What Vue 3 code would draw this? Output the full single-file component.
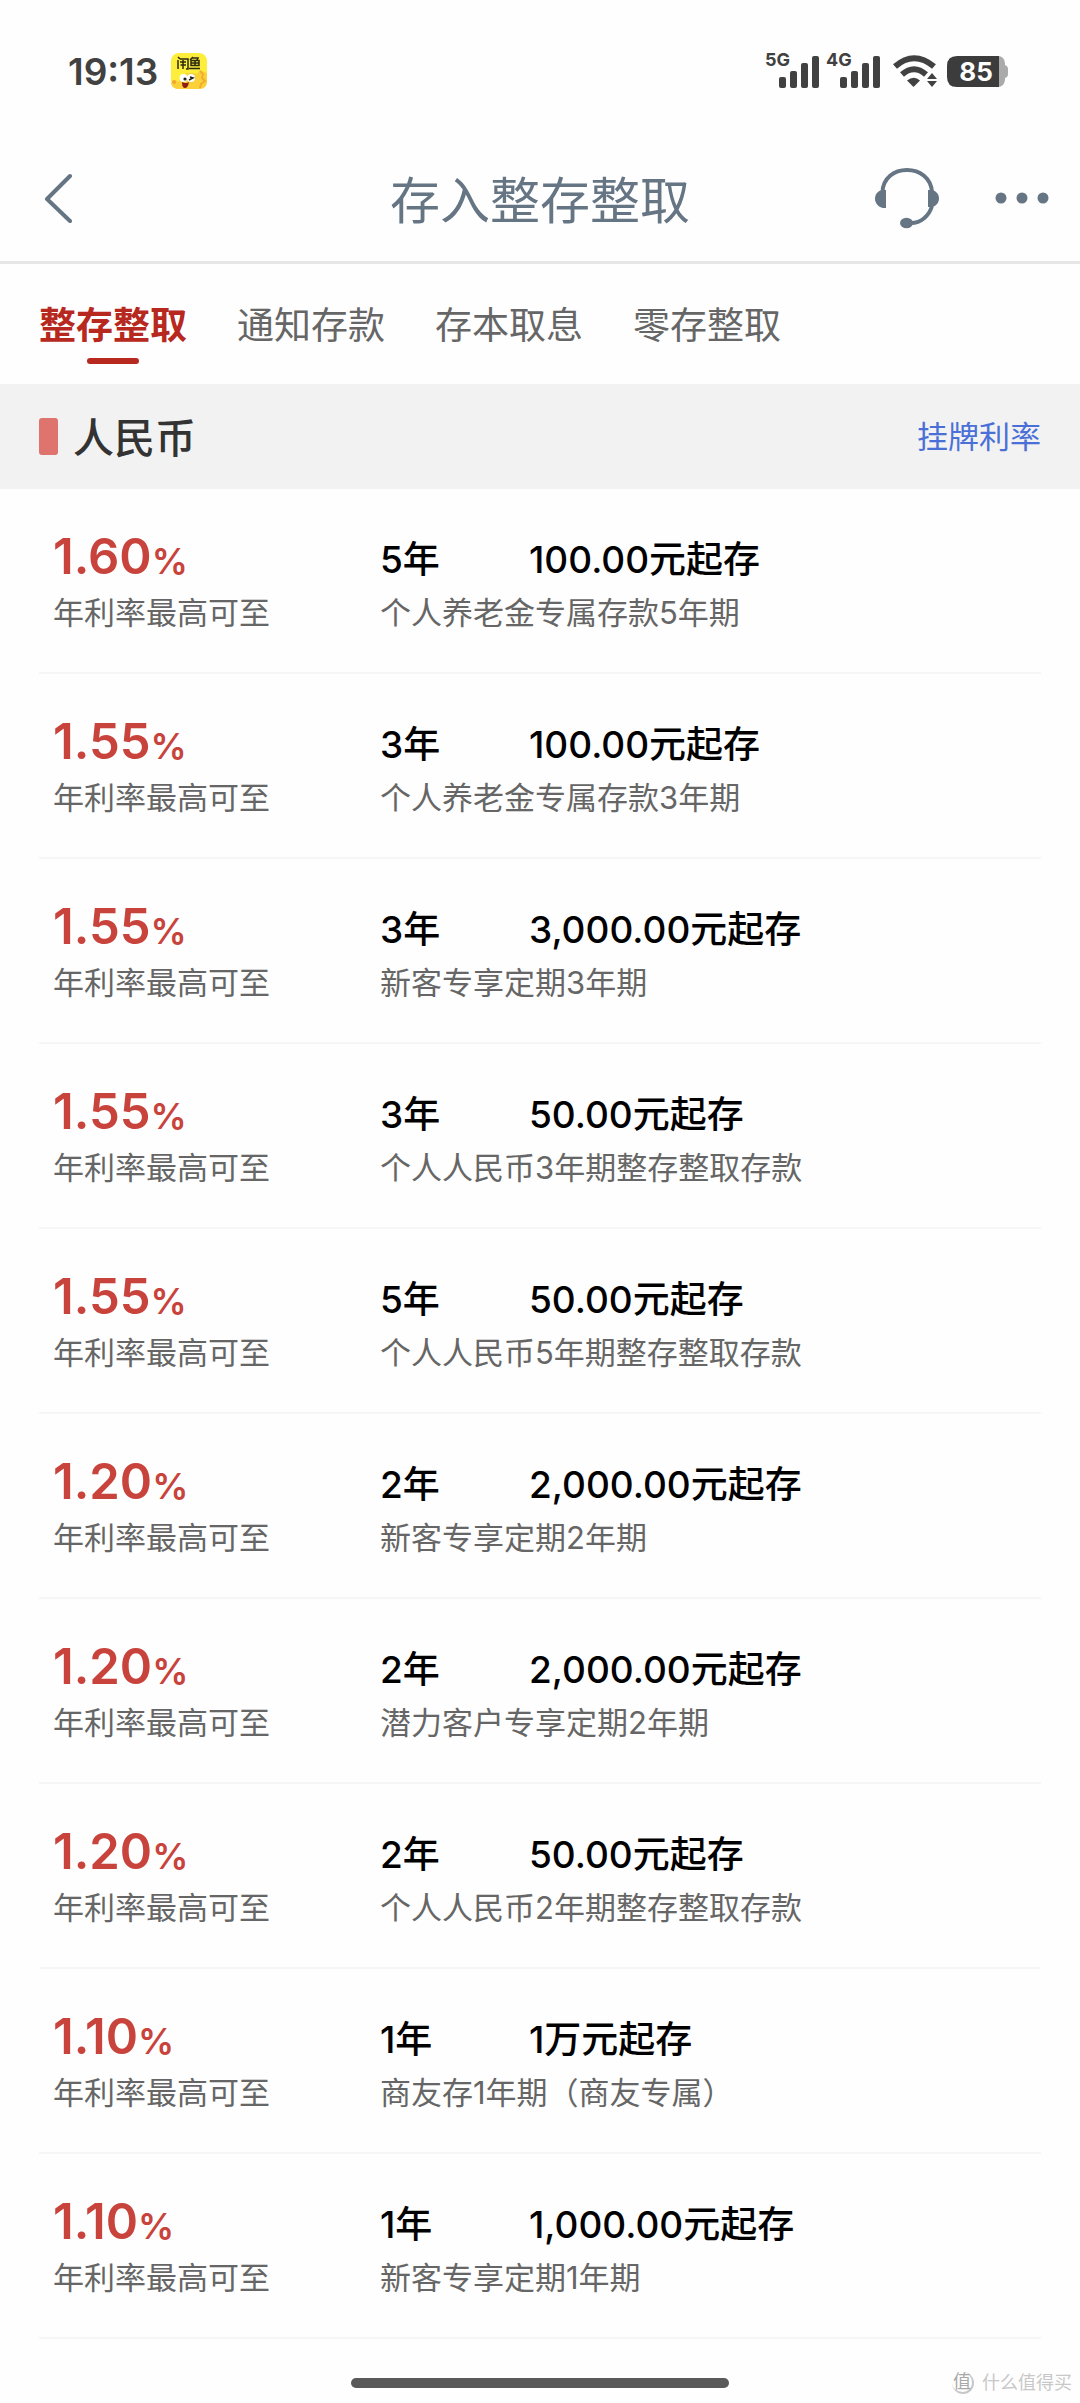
<script setup>
import { ref } from 'vue'

const tabs = ['整存整取', '通知存款', '存本取息', '零存整取']
const activeTab = ref(0)

const products = [
  { rate: '1.60', term: '5年', amount: '100.00元起存', name: '个人养老金专属存款5年期' },
  { rate: '1.55', term: '3年', amount: '100.00元起存', name: '个人养老金专属存款3年期' },
  { rate: '1.55', term: '3年', amount: '3,000.00元起存', name: '新客专享定期3年期' },
  { rate: '1.55', term: '3年', amount: '50.00元起存', name: '个人人民币3年期整存整取存款' },
  { rate: '1.55', term: '5年', amount: '50.00元起存', name: '个人人民币5年期整存整取存款' },
  { rate: '1.20', term: '2年', amount: '2,000.00元起存', name: '新客专享定期2年期' },
  { rate: '1.20', term: '2年', amount: '2,000.00元起存', name: '潜力客户专享定期2年期' },
  { rate: '1.20', term: '2年', amount: '50.00元起存', name: '个人人民币2年期整存整取存款' },
  { rate: '1.10', term: '1年', amount: '1万元起存', name: '商友存1年期（商友专属）' },
  { rate: '1.10', term: '1年', amount: '1,000.00元起存', name: '新客专享定期1年期' }
]
</script>

<template>
  <div class="page">
    <div class="status">
      <span class="time">19:13</span>
      <svg class="app-badge" width="36" height="36" viewBox="0 0 36 36" aria-hidden="true">
        <rect width="36" height="36" rx="8" fill="#fdee3c" />
        <path d="M36 20v8q0 8-8 8H8q-7 0-8-6l4-3 4 2q1-8 9-9 6-1 9 1l3-4z" fill="#fbd13a" />
        <path d="M29 18l3 3-1 4 3 3-4 3-1 4" fill="none" stroke="#f3ad2c" stroke-width="2" />
        <circle cx="3" cy="29" r="2" fill="#f3a62c" />
        <g fill="none" stroke="#2c2a10" stroke-width="1.500">
          <path d="M7 7v9M9 6h8v10h-2M7 4l2 2M9 9h6M12 7v9M9.500 12h5.500" />
          <path d="M22 4l-3 3M21 5h6l-1 2M20 7.500h8v5h-8zM24 7.500v5M20 10h8M18 15.500h11" />
        </g>
        <circle cx="12.500" cy="25" r="4" fill="#fff" />
        <circle cx="20" cy="25" r="4" fill="#fff" />
        <circle cx="14" cy="26" r="1.600" fill="#222" />
        <path d="M18 27l4-2-3-1" fill="none" stroke="#222" stroke-width="1.500" />
        <path d="M11 29q4 2 7 0-1 6-4 6t-3-6z" fill="#8f1d14" />
      </svg>
      <div class="status-icons">
        <svg v-for="net in ['5G', '4G']" :key="net" class="signal" width="56" height="44" viewBox="0 0 56 44" fill="#414141">
          <text x="0" y="22" class="net">{{ net }}</text>
          <rect x="14" y="33" width="7" height="11" rx="2" />
          <rect x="25" y="27" width="7" height="17" rx="2" />
          <rect x="36" y="19" width="7" height="25" rx="2" />
          <rect x="47" y="12" width="7" height="32" rx="2" />
        </svg>
        <svg class="wifi" width="44" height="33" viewBox="0 0 44 33" aria-hidden="true">
          <g fill="none" stroke="#414141" stroke-width="6">
            <path d="M2 11.500Q21-5 41 11.500" />
            <path d="M9 19.500Q21 9 33 19.500" />
          </g>
          <path d="M14 25.500Q21 20 27 25.500L20.500 32z" fill="#414141" />
          <path d="M39 18l5 6H34zM34 26h10l-5 6z" fill="#414141" />
        </svg>
        <svg class="battery" width="61" height="33" viewBox="0 0 61 33">
          <path d="M50 1h1q6 0 7 7v2q3 1 3 4v5q0 3-3 4v2q-1 7-7 7h-1z" fill="#aaa" />
          <path d="M10 1h42v31H10Q0 32 0 22V11Q0 1 10 1z" fill="#3c3c3c" />
          <text x="29" y="26" text-anchor="middle" class="charge">85</text>
        </svg>
      </div>
    </div>

    <header class="nav">
      <button class="icon-btn back" type="button" aria-label="返回">
        <svg width="28" height="50" viewBox="0 0 28 50" fill="none" stroke="#667583" stroke-width="4" stroke-linecap="round" stroke-linejoin="round">
          <path d="M26 3L3 26l23 22" />
        </svg>
      </button>
      <h1>存入整存整取</h1>
      <div class="actions">
        <button class="icon-btn" type="button" aria-label="客服">
          <svg width="64" height="64" viewBox="0 0 64 64">
            <g fill="none" stroke="#667583" stroke-width="4">
              <path d="M7.500 26C8 12 19 4 32 4s24 8 25 22" />
              <path d="M57 40C54 50 46 57 36 57" />
            </g>
            <path d="M7 24h4v18H8C3 41 0 37 0 32.500S3 25 7 24z" fill="#667583" />
            <path d="M57 24h-4v17h4c4-1 7-4 7-8.500S61 25 57 24z" fill="#667583" />
            <ellipse cx="31.500" cy="57" rx="6.500" ry="5.200" fill="#667583" />
          </svg>
        </button>
        <button class="icon-btn" type="button" aria-label="更多">
          <svg width="54" height="12" viewBox="0 0 54 12" fill="#667583">
            <circle cx="6" cy="6" r="5.500" />
            <circle cx="27" cy="6" r="5.500" />
            <circle cx="48" cy="6" r="5.500" />
          </svg>
        </button>
      </div>
    </header>

    <div class="tabs" role="tablist">
      <button
        v-for="(tab, i) in tabs"
        :key="tab"
        type="button"
        role="tab"
        class="tab"
        :class="{ active: i === activeTab }"
        :aria-selected="i === activeTab"
        @click="activeTab = i"
      >{{ tab }}</button>
    </div>

    <div class="section">
      <h2><span>人民币</span></h2>
      <a href="#rates">挂牌利率</a>
    </div>

    <ul class="products">
      <li v-for="(item, i) in products" :key="i" class="product">
        <div class="yield">
          <div class="rate">{{ item.rate }}<span class="percent">%</span></div>
          <div class="note">年利率最高可至</div>
        </div>
        <div class="detail">
          <div class="terms">
            <span class="term">{{ item.term }}</span>
            <span>{{ item.amount }}</span>
          </div>
          <div class="note">{{ item.name }}</div>
        </div>
      </li>
    </ul>

    <footer class="footer">
      <span class="home-bar"></span>
      <div class="watermark"><span class="seal">值</span><span>什么值得买</span></div>
    </footer>
  </div>
</template>

<style>
body {
  background: #fefefe;
}
</style>

<style scoped>
.page {
  display: flex;
  flex-direction: column;
  min-height: 100vh;
  font-family: Inter, "Noto Sans CJK SC", sans-serif;
  color: #666;
}
button {
  padding: 0;
  border: 0;
  background: none;
  font: inherit;
  color: inherit;
}
svg {
  display: block;
}
.status {
  display: flex;
  align-items: center;
  height: 142px;
  padding: 0 72px 0 68px;
}
.time {
  font-size: 37px;
  font-weight: 600;
  color: #414141;
}
.app-badge {
  margin-left: 13px;
}
.status-icons {
  display: flex;
  align-items: flex-end;
  margin-left: auto;
  padding-bottom: 10px;
}
.signal {
  margin-right: 5px;
}
.wifi {
  margin-left: 6px;
}
.battery {
  margin-left: 10px;
}
.net {
  font-size: 18px;
  font-weight: 700;
}
.charge {
  font-size: 26px;
  font-weight: 700;
  fill: #fff;
}
.nav {
  display: grid;
  grid-template-columns: 1fr auto 1fr;
  align-items: center;
  height: 111px;
  padding: 0 31px 8px;
  border-bottom: 3px solid #e6e6e6;
}
.back {
  justify-self: start;
  padding-left: 13px;
}
h1 {
  margin: 0;
  padding-top: 6px;
  font-size: 50px;
  font-weight: 400;
  line-height: 72px;
  color: #667583;
}
.actions {
  display: flex;
  align-items: center;
  justify-content: flex-end;
  gap: 56px;
}
.tabs {
  display: flex;
  gap: 50px;
  height: 120px;
  padding: 0 39px;
}
.tab {
  position: relative;
  padding-bottom: 3px;
  font-size: 37px;
}
.tab.active {
  font-weight: 700;
  color: #b7281f;
}
.tab.active::after {
  content: "";
  position: absolute;
  bottom: 20px;
  left: 50%;
  width: 52px;
  height: 6px;
  margin-left: -26px;
  border-radius: 3px;
  background: #b7281f;
}
.section {
  display: flex;
  align-items: center;
  justify-content: space-between;
  height: 105px;
  padding: 0 39px;
  background: #f2f2f2;
}
h2 {
  display: flex;
  align-items: center;
  gap: 15px;
  margin: 0;
  font-size: 41px;
  font-weight: 500;
  color: #333;
}
h2::before {
  content: "";
  width: 19px;
  height: 37px;
  border-radius: 3px;
  background: #df746e;
}
h2 span,
.section a {
  padding-bottom: 4px;
}
.section a {
  font-size: 31px;
  color: #4a70d8;
  text-decoration: none;
}
.products {
  margin: 0;
  padding: 0 39px;
  list-style: none;
}
.product {
  display: flex;
  height: 145px;
  padding: 38px 14px 0;
  border-bottom: 2px solid #f6f6f6;
}
.yield {
  width: 327px;
}
.rate {
  margin-bottom: 6px;
  font-size: 49px;
  font-weight: 600;
  line-height: 60px;
  color: #c8433c;
}
.percent {
  font-size: 36px;
  line-height: 1;
}
.terms {
  display: flex;
  font-size: 37px;
  font-weight: 500;
  line-height: 66px;
  color: #000;
}
.term {
  width: 149px;
}
.note {
  font-size: 31px;
  line-height: 40px;
}
.footer {
  display: grid;
  grid-template-columns: 1fr 35% 1fr;
  align-items: center;
  height: 63px;
  margin-top: auto;
  padding-top: 22px;
  box-sizing: border-box;
}
.home-bar {
  grid-column: 2;
  height: 10px;
  border-radius: 5px;
  background: #595959;
}
.watermark {
  display: flex;
  align-items: center;
  justify-content: flex-end;
  gap: 8px;
  padding-right: 8px;
  font-size: 18px;
  line-height: 24px;
  color: #c8c8c8;
}
.seal {
  width: 20px;
  height: 20px;
  border-right: 2px solid #c8c8c8;
  border-bottom: 2px solid #c8c8c8;
  border-radius: 50%;
  font-size: 18px;
  line-height: 20px;
  text-align: center;
  color: #a8a8a8;
}
</style>
